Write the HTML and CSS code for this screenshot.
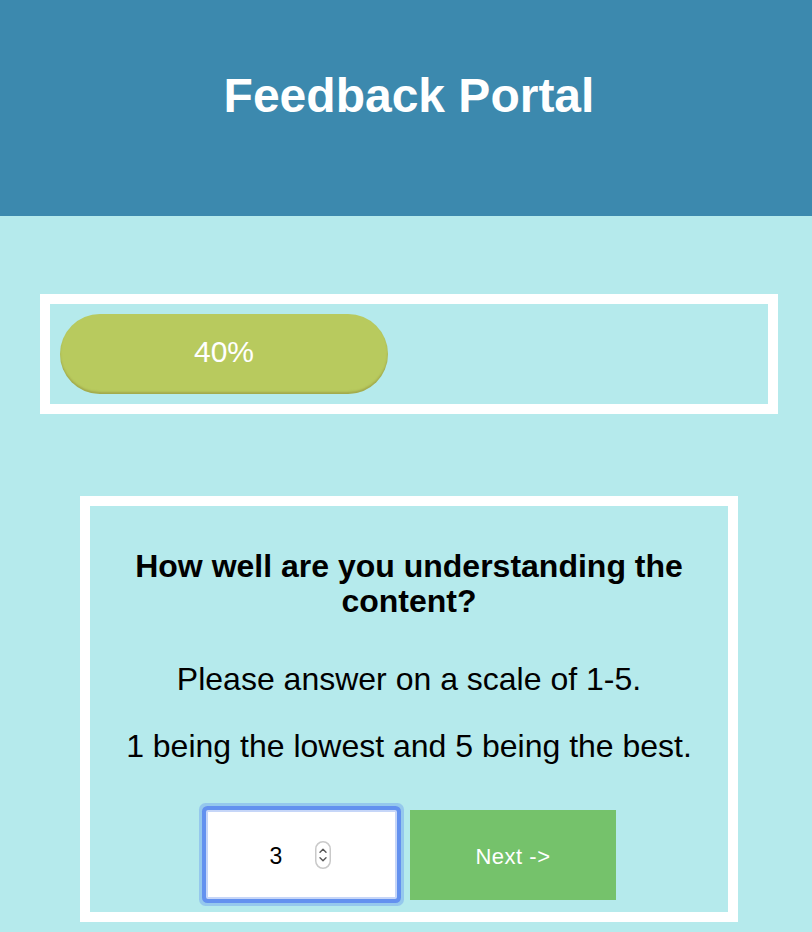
FILE: index.html
```html
<!DOCTYPE html>
<html lang="en">
<head>
<meta charset="utf-8">
<title>Feedback Portal</title>
<link rel="stylesheet" href="styles.css">
</head>
<body>
<header class="site-header">
  <h1 class="site-title">Feedback Portal</h1>
</header>
<main class="content">
  <section class="progress-box">
    <div class="progress-bar" style="width: 328px;">40%</div>
  </section>
  <section class="question-card">
    <h2 class="question-title">How well are you understanding the content?</h2>
    <p class="question-text first">Please answer on a scale of 1-5.</p>
    <p class="question-text">1 being the lowest and 5 being the best.</p>
    <form class="answer-row">
      <div class="number-field">
        <input class="number-input" type="text" value="3" aria-label="Rating">
        <svg class="spinner" width="16" height="28" viewBox="0 0 16 28" aria-hidden="true">
          <rect x="0.75" y="0.75" width="14.5" height="26.5" rx="7.25" fill="#fff" stroke="#c9c9c9" stroke-width="1.5"/>
          <path d="M5 11.2 L8 8.2 L11 11.2" fill="none" stroke="#555" stroke-width="1.4" stroke-linecap="round" stroke-linejoin="round"/>
          <path d="M5 16.8 L8 19.8 L11 16.8" fill="none" stroke="#555" stroke-width="1.4" stroke-linecap="round" stroke-linejoin="round"/>
        </svg>
      </div>
      <button class="next-button" type="button">Next -&gt;</button>
    </form>
  </section>
</main>
</body>
</html>
```
FILE: styles.css
```css
html, body {
  margin: 0;
  padding: 0;
}
body {
  background: #b5eaec;
  font-family: "Liberation Sans", Arial, Helvetica, sans-serif;
  color: #000;
}
.site-header {
  background: #3c89ae;
  height: 216px;
  box-sizing: border-box;
  padding-top: 68px;
}
.site-title {
  margin: 0;
  text-align: center;
  color: #fff;
  font-size: 48px;
  font-weight: bold;
  line-height: 55px;
  padding-left: 6px;
}
.content {
  padding-top: 78px;
}
.progress-box {
  margin-left: 40px;
  width: 738px;
  box-sizing: border-box;
  border: 10px solid #fff;
  padding: 10px 10px 10px;
}
.progress-bar {
  height: 80px;
  border-radius: 40px;
  background: #b8ca5e;
  box-shadow: inset 0 -2px 2px rgba(120, 110, 40, 0.35);
  color: #fff;
  font-size: 30px;
  line-height: 76px;
  text-align: center;
}
.question-card {
  margin-left: 80px;
  margin-top: 82px;
  width: 658px;
  height: 426px;
  box-sizing: border-box;
  border: 10px solid #fff;
  padding-top: 43px;
  text-align: center;
}
.question-title {
  margin: 0 auto;
  width: 600px;
  font-size: 32px;
  font-weight: bold;
  line-height: 35px;
}
.question-text {
  margin: 30px 0 0;
  font-size: 32px;
  line-height: 37px;
}
.question-text.first {
  margin-top: 42px;
}
.answer-row {
  margin: 45px 0 0;
  display: flex;
  justify-content: center;
  gap: 13px;
  padding-left: 4px;
}
.number-field {
  width: 191px;
  height: 89px;
  box-sizing: border-box;
  background: #fff;
  border: 2px solid #c6d6f8;
  border-radius: 2px;
  box-shadow: 0 0 0 4px #6391ef, 0 0 0 7px rgba(110, 160, 240, 0.45);
  display: flex;
  align-items: center;
}
.number-input {
  width: 74px;
  margin-left: 31px;
  border: none;
  outline: none;
  background: transparent;
  padding: 3px 0 0;
  text-align: center;
  font-family: "Liberation Sans", Arial, Helvetica, sans-serif;
  font-size: 23px;
  color: #000;
}
.spinner {
  display: block;
  margin-left: 2px;
  margin-top: 1px;
}
.next-button {
  width: 206px;
  height: 90px;
  border: none;
  background: #75c26b;
  color: #fff;
  font-family: "Liberation Sans", Arial, Helvetica, sans-serif;
  font-size: 22px;
  letter-spacing: 0.5px;
  padding: 4px 0 0;
  cursor: pointer;
}
```
